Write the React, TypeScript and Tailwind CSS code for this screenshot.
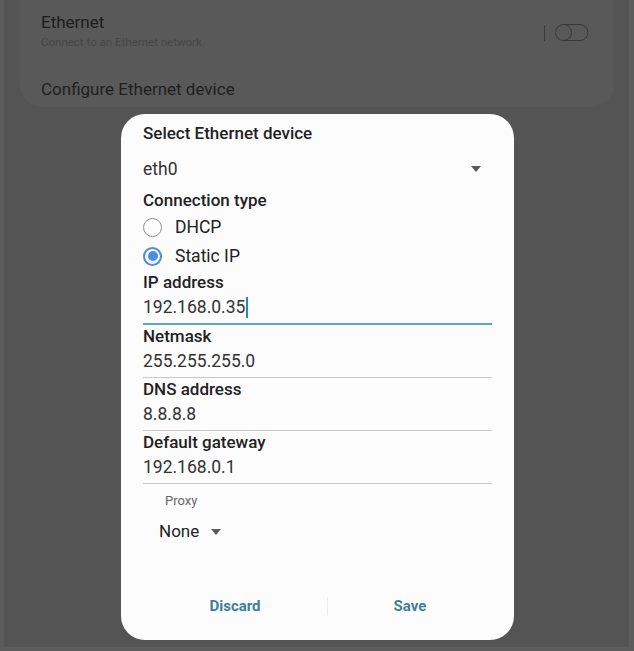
import React from "react";

const font = { fontFamily: "Roboto, 'Noto Sans', sans-serif" };

function Field({
    label,
    value,
    focused,
}: {
    label: string;
    value: string;
    focused?: boolean;
}) {
    return (
        <div className="flex flex-col">
            <div className="h-6 flex items-center text-[17px] font-medium text-[#222]">
                {label}
            </div>
            <div className="h-6 flex items-center text-[17.5px] text-[#333]">
                {value}
                {focused && <span className="w-[2px] h-[21px] bg-[#2f86ab] ml-[1px]" />}
            </div>
            {focused ? (
                <div className="mt-1 h-[2px] bg-[#5ba8c4]" />
            ) : (
                <div className="mt-1 h-px bg-[#c9c9c9]" />
            )}
        </div>
    );
}

function Radio({ label, checked }: { label: string; checked?: boolean }) {
    return (
        <div className="flex items-center gap-[13px] h-full">
            {checked ? (
                <span className="w-[19px] h-[19px] rounded-full border-2 border-[#4b8ce6] flex items-center justify-center">
                    <span className="w-[10px] h-[10px] rounded-full bg-[#4b8ce6]" />
                </span>
            ) : (
                <span className="w-[19px] h-[19px] rounded-full border-[1.5px] border-[#8f8f8f]" />
            )}
            <span className="text-[17.5px] text-[#222]">{label}</span>
        </div>
    );
}

function Caret() {
    return (
        <svg width="10" height="7" viewBox="0 0 10 7">
            <path d="M0 0 L10 0 L5 6 Z" fill="#5a5a5a" />
        </svg>
    );
}

export default function App() {
    return (
        <div className="w-[634px] h-[651px] bg-[#5c5c5c] pl-1 pr-[5px] pb-1 flex" style={font}>
            <div className="flex-1 bg-[#545454] flex flex-col">
                {/* settings card behind the dialog */}
                <div className="ml-4 w-[594px] h-[107px] rounded-b-[22px] bg-[#595959] pl-[21px] pr-6 flex flex-col">
                    <div className="flex items-start">
                        <div className="flex-1">
                            <div className="h-[22px] mt-3 flex items-center text-[17px] text-[#1c1c1c]">
                                Ethernet
                            </div>
                            <div className="h-4 mt-[1px] flex items-center text-[11.5px] text-[#474747]">
                                Connect to an Ethernet network.
                            </div>
                        </div>
                        <div className="mt-[23px] flex items-center gap-[9px]">
                            <span className="w-px h-[16px] bg-[#3c3c3c]" />
                            <svg width="36" height="19" viewBox="0 0 36 19">
                                <circle cx="9.5" cy="9.5" r="8" fill="none" stroke="#383838" strokeWidth="1" />
                                <path d="M9.5 1.5 H26 A8 8 0 0 1 26 17.5 H9.5" fill="none" stroke="#383838" strokeWidth="1" />
                            </svg>
                        </div>
                    </div>
                    <div className="mt-[27px] h-6 flex items-center text-[17px] text-[#1f1f1f]">
                        Configure Ethernet device
                    </div>
                </div>

                {/* dialog */}
                <div className="mt-[7px] ml-[117px] w-[393px] rounded-[24px] bg-[#fcfcfc] px-[22px] pt-2 pb-[14px] flex flex-col">
                    <div className="h-6 flex items-center text-[17px] font-medium text-[#222]">
                        Select Ethernet device
                    </div>
                    <div className="mt-[11px] h-6 flex items-center justify-between pr-[11px]">
                        <span className="text-[17.5px] text-[#333]">eth0</span>
                        <Caret />
                    </div>
                    <div className="mt-2 h-6 flex items-center text-[17px] font-medium text-[#222]">
                        Connection type
                    </div>
                    <div className="h-[28px]">
                        <Radio label="DHCP" />
                    </div>
                    <div className="h-[30px]">
                        <Radio label="Static IP" checked />
                    </div>
                    <Field label="IP address" value="192.168.0.35" focused />
                    <Field label="Netmask" value="255.255.255.0" />
                    <Field label="DNS address" value="8.8.8.8" />
                    <Field label="Default gateway" value="192.168.0.1" />

                    <div className="mt-[7px] h-5 pl-[22px] flex items-center text-[13px] text-[#666]">
                        Proxy
                    </div>
                    <div className="mt-[9px] h-6 pl-4 flex items-center gap-[12px]">
                        <span className="text-[17px] text-[#222]">None</span>
                        <Caret />
                    </div>

                    <div className="mt-[42px] h-10 flex items-center">
                        <div className="w-[184px] text-center text-[15px] font-bold text-[#3d7f9b]">
                            Discard
                        </div>
                        <span className="w-px h-[18px] bg-[#ececec]" />
                        <div className="flex-1 text-center text-[15px] font-bold text-[#3d7f9b]">
                            Save
                        </div>
                    </div>
                </div>
            </div>
        </div>
    );
}
